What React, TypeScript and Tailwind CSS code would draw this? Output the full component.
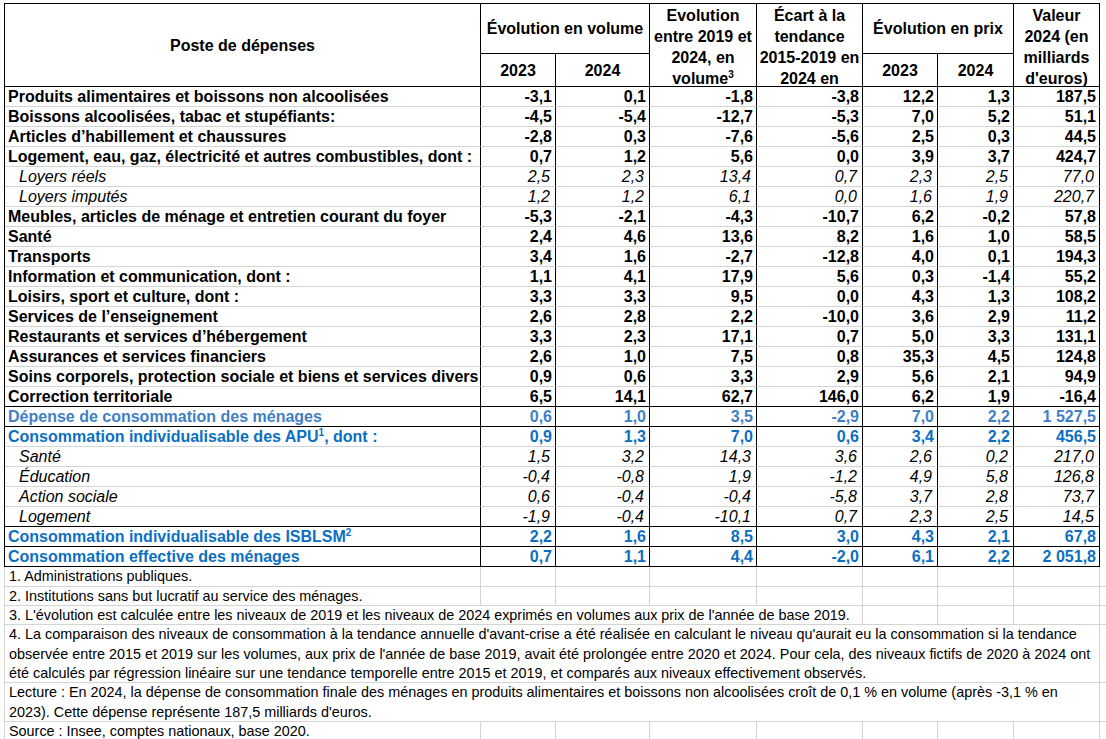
import React from "react";

type Kind = "bold" | "italic" | "blueLight" | "blue";

interface Row {
  label: React.ReactNode;
  values: string[];
  kind: Kind;
  blackBottom?: boolean;
}

const colWidths = [477, 75, 94, 107, 106, 75, 76, 86];

const Sup = ({ n }: { n: string }) => <span className="relative -top-[6px] text-[10px] leading-none">{n}</span>;

const rows: Row[] = [
  { label: "Produits alimentaires et boissons non alcoolisées", values: ["-3,1", "0,1", "-1,8", "-3,8", "12,2", "1,3", "187,5"], kind: "bold" },
  { label: "Boissons alcoolisées, tabac et stupéfiants:", values: ["-4,5", "-5,4", "-12,7", "-5,3", "7,0", "5,2", "51,1"], kind: "bold" },
  { label: "Articles d’habillement et chaussures", values: ["-2,8", "0,3", "-7,6", "-5,6", "2,5", "0,3", "44,5"], kind: "bold" },
  { label: "Logement, eau, gaz, électricité et autres combustibles, dont :", values: ["0,7", "1,2", "5,6", "0,0", "3,9", "3,7", "424,7"], kind: "bold" },
  { label: "Loyers réels", values: ["2,5", "2,3", "13,4", "0,7", "2,3", "2,5", "77,0"], kind: "italic" },
  { label: "Loyers imputés", values: ["1,2", "1,2", "6,1", "0,0", "1,6", "1,9", "220,7"], kind: "italic" },
  { label: "Meubles, articles de ménage et entretien courant du foyer", values: ["-5,3", "-2,1", "-4,3", "-10,7", "6,2", "-0,2", "57,8"], kind: "bold" },
  { label: "Santé", values: ["2,4", "4,6", "13,6", "8,2", "1,6", "1,0", "58,5"], kind: "bold" },
  { label: "Transports", values: ["3,4", "1,6", "-2,7", "-12,8", "4,0", "0,1", "194,3"], kind: "bold" },
  { label: "Information et communication, dont :", values: ["1,1", "4,1", "17,9", "5,6", "0,3", "-1,4", "55,2"], kind: "bold" },
  { label: "Loisirs, sport et culture, dont :", values: ["3,3", "3,3", "9,5", "0,0", "4,3", "1,3", "108,2"], kind: "bold" },
  { label: "Services de l’enseignement", values: ["2,6", "2,8", "2,2", "-10,0", "3,6", "2,9", "11,2"], kind: "bold" },
  { label: "Restaurants et services d’hébergement", values: ["3,3", "2,3", "17,1", "0,7", "5,0", "3,3", "131,1"], kind: "bold" },
  { label: "Assurances et services financiers", values: ["2,6", "1,0", "7,5", "0,8", "35,3", "4,5", "124,8"], kind: "bold" },
  { label: "Soins corporels, protection sociale et biens et services divers", values: ["0,9", "0,6", "3,3", "2,9", "5,6", "2,1", "94,9"], kind: "bold" },
  { label: "Correction territoriale", values: ["6,5", "14,1", "62,7", "146,0", "6,2", "1,9", "-16,4"], kind: "bold", blackBottom: true },
  { label: "Dépense de consommation des ménages", values: ["0,6", "1,0", "3,5", "-2,9", "7,0", "2,2", "1 527,5"], kind: "blueLight", blackBottom: true },
  {
    label: (
      <>
        Consommation individualisable des APU<Sup n="1" />, dont :
      </>
    ),
    values: ["0,9", "1,3", "7,0", "0,6", "3,4", "2,2", "456,5"],
    kind: "blue",
  },
  { label: "Santé", values: ["1,5", "3,2", "14,3", "3,6", "2,6", "0,2", "217,0"], kind: "italic" },
  { label: "Éducation", values: ["-0,4", "-0,8", "1,9", "-1,2", "4,9", "5,8", "126,8"], kind: "italic" },
  { label: "Action sociale", values: ["0,6", "-0,4", "-0,4", "-5,8", "3,7", "2,8", "73,7"], kind: "italic" },
  { label: "Logement", values: ["-1,9", "-0,4", "-10,1", "0,7", "2,3", "2,5", "14,5"], kind: "italic", blackBottom: true },
  {
    label: (
      <>
        Consommation individualisable des ISBLSM<Sup n="2" />
      </>
    ),
    values: ["2,2", "1,6", "8,5", "3,0", "4,3", "2,1", "67,8"],
    kind: "blue",
    blackBottom: true,
  },
  { label: "Consommation effective des ménages", values: ["0,7", "1,1", "4,4", "-2,0", "6,1", "2,2", "2 051,8"], kind: "blue", blackBottom: true },
];

const kindClass: Record<Kind, string> = {
  bold: "font-bold text-black",
  italic: "italic text-black",
  blueLight: "font-bold text-[#3f7fc6]",
  blue: "font-bold text-[#0b6fc3]",
};

const hd = "border-r border-b border-black text-center font-bold align-middle leading-[21px] p-0";

function NoteRow({
  height,
  span,
  children,
}: {
  height: number;
  span: number;
  children: React.ReactNode;
}) {
  const spanWidth = colWidths.slice(0, span).reduce((a, b) => a + b, 0);
  return (
    <div className="flex border-b border-[#d4d4d4]" style={{ height }}>
      <div
        className="shrink-0 border-l border-r border-[#d4d4d4] pl-[4px] pr-[1px] leading-[19.5px] relative z-10"
        style={{ width: spanWidth }}
      >
        {children}
      </div>
      {colWidths.slice(span).map((w, i) => (
        <div key={i} className="shrink-0 border-r border-[#d4d4d4]" style={{ width: w }} />
      ))}
    </div>
  );
}

export default function App() {
  return (
    <div
      className="w-[1106px] h-[739px] overflow-hidden bg-white text-black pl-[4px] pt-[3px]"
      style={{ fontFamily: "'Liberation Sans', Arial, sans-serif" }}
    >
      <table className="table-fixed border-separate border-spacing-0 border-l border-t border-black text-[16px]">
        <colgroup>
          {colWidths.map((w, i) => (
            <col key={i} style={{ width: i === 0 ? w - 1 : w }} />
          ))}
        </colgroup>
        <thead>
          <tr className="h-[50px]">
            <th rowSpan={2} className={hd}>
              Poste de dépenses
            </th>
            <th colSpan={2} className={hd}>
              Évolution en volume
            </th>
            <th rowSpan={2} className={hd}>
              <div className="h-[82px] overflow-hidden pt-[1px]">
                Evolution
                <br />
                entre 2019 et
                <br />
                2024, en
                <br />
                volume<Sup n="3" />
              </div>
            </th>
            <th rowSpan={2} className={hd}>
              <div className="h-[82px] overflow-hidden pt-[1px]">
                Écart à la
                <br />
                tendance
                <br />
                2015-2019 en
                <br />
                2024 en
              </div>
            </th>
            <th colSpan={2} className={hd}>
              Évolution en prix
            </th>
            <th rowSpan={2} className={hd}>
              <div className="h-[82px] overflow-hidden pt-[1px]">
                Valeur
                <br />
                2024 (en
                <br />
                milliards
                <br />
                d'euros)
              </div>
            </th>
          </tr>
          <tr className="h-[33px]">
            <th className={hd}>2023</th>
            <th className={hd}>2024</th>
            <th className={hd}>2023</th>
            <th className={hd}>2024</th>
          </tr>
        </thead>
        <tbody>
          {rows.map((r, ri) => {
            const bottom = r.blackBottom ? "border-black" : "border-[#d4d4d4]";
            return (
              <tr key={ri} className="h-[20px]">
                <td
                  className={`border-b ${bottom} border-r border-r-black p-0 leading-[19px] whitespace-nowrap ${kindClass[r.kind]} ${
                    r.kind === "italic" ? "pl-[14px]" : "pl-[3px]"
                  }`}
                >
                  {r.label}
                </td>
                {r.values.map((v, vi) => (
                  <td
                    key={vi}
                    className={`border-b ${bottom} border-r border-r-black p-0 text-right leading-[19px] whitespace-nowrap ${kindClass[r.kind]} ${
                      r.kind === "italic" ? "pr-[5px]" : "pr-[3px]"
                    }`}
                  >
                    {v}
                  </td>
                ))}
              </tr>
            );
          })}
        </tbody>
      </table>

      <div className="w-[1102px] text-[14.4px]">
        <NoteRow height={20} span={1}>
          <span className="whitespace-nowrap">1. Administrations publiques.</span>
        </NoteRow>
        <NoteRow height={19} span={1}>
          <span className="whitespace-nowrap">2. Institutions sans but lucratif au service des ménages.</span>
        </NoteRow>
        <NoteRow height={19} span={5}>
          <span className="whitespace-nowrap">
            3. L'évolution est calculée entre les niveaux de 2019 et les niveaux de 2024 exprimés en volumes aux prix de l'année de base 2019.
          </span>
        </NoteRow>
        <NoteRow height={58} span={8}>
          4. La comparaison des niveaux de consommation à la tendance annuelle d'avant-crise a été réalisée en calculant le niveau qu'aurait eu la
          consommation si la tendance observée entre 2015 et 2019 sur les volumes, aux prix de l'année de base 2019, avait été prolongée entre 2020
          et 2024. Pour cela, des niveaux fictifs de 2020 à 2024 ont été calculés par régression linéaire sur une tendance temporelle entre 2015 et
          2019, et comparés aux niveaux effectivement observés.
        </NoteRow>
        <NoteRow height={39} span={8}>
          Lecture : En 2024, la dépense de consommation finale des ménages en produits alimentaires et boissons non alcoolisées croît de 0,1 % en
          volume (après -3,1 % en 2023). Cette dépense représente 187,5 milliards d'euros.
        </NoteRow>
        <NoteRow height={20} span={1}>
          <span className="whitespace-nowrap">Source : Insee, comptes nationaux, base 2020.</span>
        </NoteRow>
      </div>
    </div>
  );
}
